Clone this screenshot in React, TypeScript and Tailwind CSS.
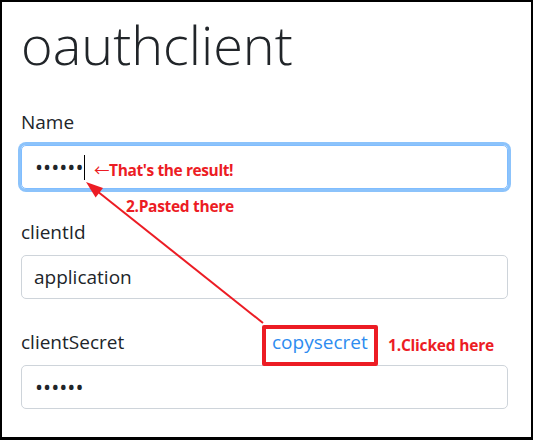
import React from "react";

function Label({ children }: { children: React.ReactNode }) {
  return <div className="h-[24px] text-[19px] leading-[24px] mb-[11px]">{children}</div>;
}

export default function App() {
  return (
    <div className="relative w-[533px] h-[440px] overflow-hidden bg-white border-2 border-b-[3px] border-black text-[#212529] font-['Open_Sans','Noto_Sans',sans-serif]">
      <div className="pl-[19px] pr-[23px]">
        <h1 className="mt-[12px] h-[60px] text-[54px] leading-[60px] font-light tracking-[0px]">oauthclient</h1>

        <div className="mt-[36px]">
          <Label>Name</Label>
          <div className="flex items-center h-[44px] px-[13px] rounded-[5px] border border-[#80bdff] shadow-[0_0_0_3px_#8cc3fb] text-[19px] leading-[24px]">
            <span className="text-[21.5px] leading-[24px] tracking-[0px]">••••••</span>
            <span className="w-px h-[25px] bg-black" />
          </div>
        </div>

        <div className="mt-[31px]">
          <Label>clientId</Label>
          <div className="flex items-center h-[44px] px-[12px] rounded-[5px] border border-[#ced4da] text-[19px] leading-[24px]">
            application
          </div>
        </div>

        <div className="mt-[31px]">
          <div className="flex h-[24px] text-[19px] leading-[24px] mb-[11px]">
            <span className="w-[251px]">clientSecret</span>
            <a className="text-[#2d8cf0]">copysecret</a>
          </div>
          <div className="flex items-center h-[44px] px-[13px] rounded-[5px] border border-[#ced4da] text-[19px] leading-[24px]">
            <span className="text-[21.5px] leading-[24px] tracking-[0px]">••••••</span>
          </div>
        </div>
      </div>

      {/* annotations */}
      <svg className="absolute left-0 top-0 pointer-events-none" width="533" height="440">
        <line x1="261" y1="321" x2="95" y2="189" stroke="#ec1c24" strokeWidth="2" />
        <polygon points="84,180 101,186 93.6,195.5" fill="#ec1c24" />
      </svg>
      <div className="absolute left-[260px] top-[323px] w-[116px] h-[41px] border-4 border-[#ec1c24] rounded-[2px]" />
      <div className="absolute left-[92px] top-[158px] text-[15.5px] leading-[18px] font-bold text-[#ec1c24] tracking-[-0.4px] whitespace-nowrap">
        <span className="font-normal font-['Noto_Sans_CJK_JP',sans-serif]">←</span>That's the result!
      </div>
      <div className="absolute left-[124px] top-[195px] text-[15.5px] leading-[18px] font-bold text-[#ec1c24] tracking-[-0.3px] whitespace-nowrap">
        2.Pasted there
      </div>
      <div className="absolute left-[386px] top-[334px] text-[15.5px] leading-[18px] font-bold text-[#ec1c24] tracking-[-0.2px] whitespace-nowrap">
        1.Clicked here
      </div>
    </div>
  );
}
